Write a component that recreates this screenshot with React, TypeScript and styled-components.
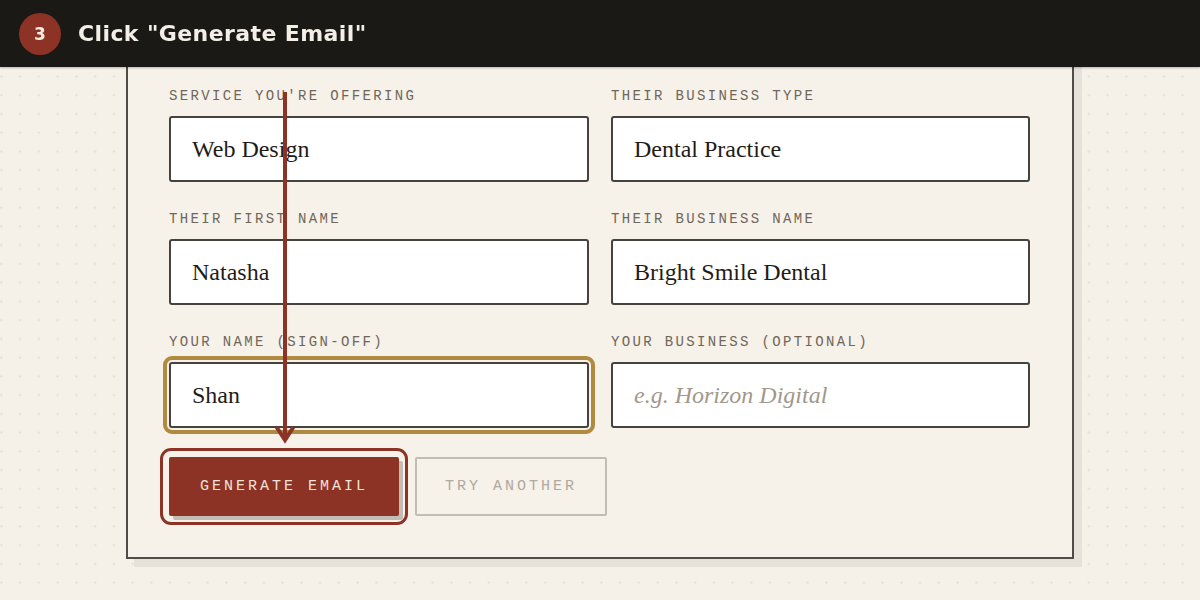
import { createGlobalStyle, styled } from 'styled-components';

const GlobalStyle = createGlobalStyle`
  * {
    box-sizing: border-box;
  }

  body {
    margin: 0;
    background-color: #f5f0e8;
    background-image: radial-gradient(circle, #e7e1d7 1px, transparent 1.3px);
    background-size: 18.75px 18.75px;
    background-position: -8px -8px;
    font-family: 'Liberation Sans', sans-serif;
  }
`;

const ACCENT = '#8c3326';

interface Field {
  label: string;
  value?: string;
  placeholder?: string;
  focused?: boolean;
}

const fields: Field[] = [
  { label: "Service you're offering", value: 'Web Design' },
  { label: 'Their business type', value: 'Dental Practice' },
  { label: 'Their first name', value: 'Natasha' },
  { label: 'Their business name', value: 'Bright Smile Dental' },
  { label: 'Your name (sign-off)', value: 'Shan', focused: true },
  { label: 'Your business (optional)', placeholder: 'e.g. Horizon Digital' },
];

function App() {
  return (
    <>
      <GlobalStyle />
      <StyledPage>
        <StepBar>
          <StepBadge>3</StepBadge>
          <StepTitle>Click "Generate Email"</StepTitle>
        </StepBar>

        <StyledCard>
          <FieldGrid>
            {fields.map((field) => (
              <FieldGroup key={field.label}>
                <FieldLabel>{field.label}</FieldLabel>
                <TextInput
                  $focused={field.focused}
                  defaultValue={field.value}
                  placeholder={field.placeholder}
                  readOnly
                />
              </FieldGroup>
            ))}
          </FieldGrid>

          <ButtonRow>
            <PrimaryButton type="button">Generate Email</PrimaryButton>
            <GhostButton type="button">Try Another</GhostButton>
          </ButtonRow>
        </StyledCard>

        <PointerArrow width="20" height="354" viewBox="0 0 20 354">
          <line x1="10" y1="0" x2="10" y2="347" stroke={ACCENT} strokeWidth="4" />
          <polyline
            points="1.5,335 10,348 18.5,335"
            fill="none"
            stroke={ACCENT}
            strokeWidth="4"
          />
        </PointerArrow>
      </StyledPage>
    </>
  );
}

export default App;

const StyledPage = styled.div`
  position: relative;
  min-height: 600px;
  padding-top: 44px;
  padding-bottom: 40px;
`;

const StepBar = styled.header`
  position: fixed;
  top: 0;
  left: 0;
  right: 0;
  z-index: 10;

  display: flex;
  align-items: center;
  gap: 16px;

  height: 67px;
  padding-left: 19px;

  background-color: #1b1915;
  box-shadow: 0 1px 2px rgba(0, 0, 0, 0.25);
`;

const StepBadge = styled.span`
  display: flex;
  align-items: center;
  justify-content: center;

  width: 42px;
  height: 42px;
  border-radius: 50%;

  background-color: ${ACCENT};
  color: #f3ece2;
  font-family: 'DejaVu Sans', sans-serif;
  font-size: 17px;
  font-weight: 700;
`;

const StepTitle = styled.h1`
  margin: 0 0 0 1px;
  color: #f3efe6;
  font-family: 'DejaVu Sans', sans-serif;
  font-size: 22px;
  font-weight: 700;
  letter-spacing: 0.4px;
`;

const StyledCard = styled.section`
  width: 948px;
  margin: 0 auto;
  padding: 42px 42px 41px 41px;

  background-color: #f6f1e9;
  border: 2px solid #4f4b46;
  box-shadow: 8px 8px 0 #e6e1d9;
`;

const FieldGrid = styled.div`
  display: grid;
  grid-template-columns: 420px 419px;
  column-gap: 22px;
  row-gap: 29px;
`;

const FieldGroup = styled.div`
  display: flex;
  flex-direction: column;
  gap: 12px;
`;

const FieldLabel = styled.label`
  font-family: 'Liberation Mono', monospace;
  font-size: 14px;
  line-height: 16px;
  letter-spacing: 2.35px;
  text-transform: uppercase;
  color: #6f665a;
`;

const TextInput = styled.input<{ $focused?: boolean }>`
  height: 66px;
  width: 100%;
  padding: 0 21px;

  background-color: #ffffff;
  border: 2px solid #46423e;
  border-radius: 3px;

  font-family: 'Liberation Serif', serif;
  font-size: 24px;
  color: #1f1c18;

  outline: ${({ $focused }) => ($focused ? '4px solid #b08a3e' : 'none')};
  outline-offset: 2px;

  &::placeholder {
    color: #a1988b;
    font-style: italic;
  }
`;

const ButtonRow = styled.div`
  display: flex;
  gap: 16px;
  margin-top: 29px;
`;

const ButtonBase = styled.button`
  height: 59px;
  padding: 0;
  border-radius: 2px;

  font-family: 'Liberation Mono', monospace;
  font-size: 15px;
  letter-spacing: 3px;
  text-transform: uppercase;
  white-space: nowrap;
  cursor: pointer;
`;

const PrimaryButton = styled(ButtonBase)`
  width: 230px;
  border: none;
  background-color: ${ACCENT};
  color: #f2e2d8;
  box-shadow: 4px 4px 0 #c3bdb3;

  outline: 3px solid ${ACCENT};
  outline-offset: 6px;
`;

const GhostButton = styled(ButtonBase)`
  width: 192px;
  background-color: transparent;
  border: 2px solid #c2bcb2;
  color: #b0a99e;
`;

const PointerArrow = styled.svg`
  position: absolute;
  top: 92px;
  left: 275px;
  z-index: 5;
`;
